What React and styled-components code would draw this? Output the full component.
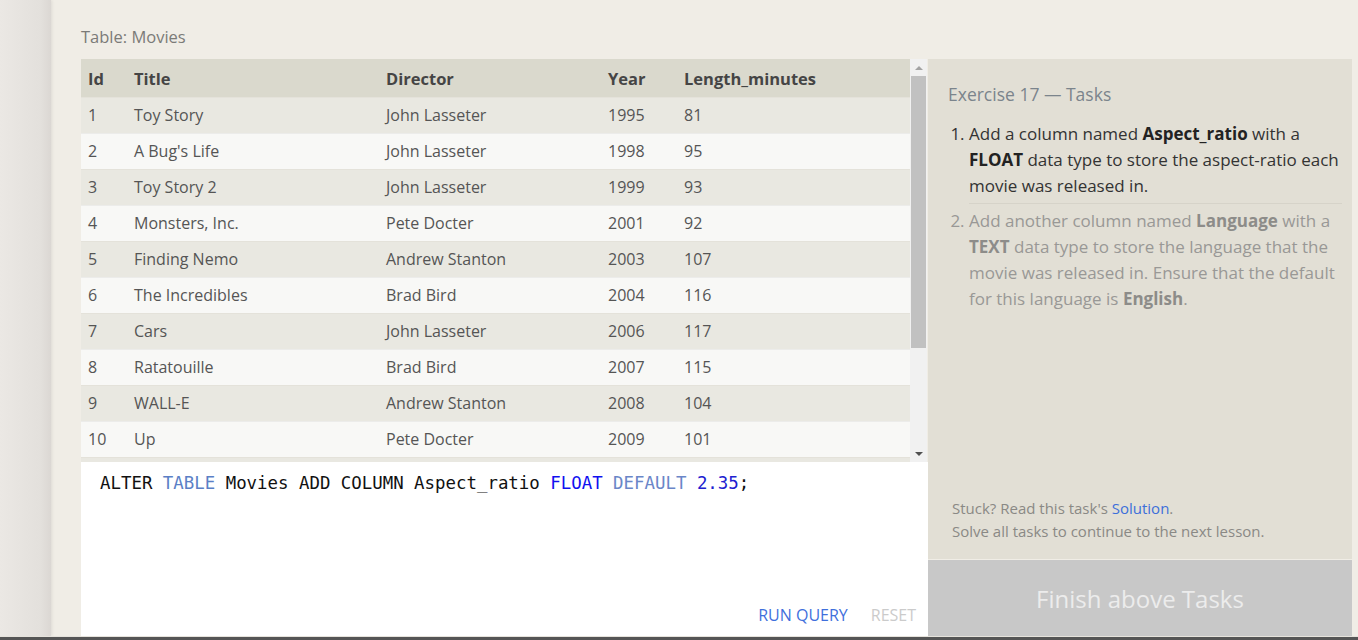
import React from "react";
import styled, { createGlobalStyle } from "styled-components";

const GlobalStyle = createGlobalStyle`
  html, body {
    margin: 0;
    padding: 0;
    height: 640px;
    overflow: hidden;
    background: #f0ede6;
    font-family: "Open Sans", "Noto Sans", sans-serif;
  }
  * {
    box-sizing: border-box;
  }
`;

const movies = [
  [1, "Toy Story", "John Lasseter", 1995, 81],
  [2, "A Bug's Life", "John Lasseter", 1998, 95],
  [3, "Toy Story 2", "John Lasseter", 1999, 93],
  [4, "Monsters, Inc.", "Pete Docter", 2001, 92],
  [5, "Finding Nemo", "Andrew Stanton", 2003, 107],
  [6, "The Incredibles", "Brad Bird", 2004, 116],
  [7, "Cars", "John Lasseter", 2006, 117],
  [8, "Ratatouille", "Brad Bird", 2007, 115],
  [9, "WALL-E", "Andrew Stanton", 2008, 104],
  [10, "Up", "Pete Docter", 2009, 101],
  [11, "Toy Story 3", "Lee Unkrich", 2010, 103],
  [12, "Cars 2", "John Lasseter", 2011, 120],
];

const Page = styled.div`
  display: flex;
  flex-direction: column;
  height: 640px;
`;

const Body = styled.div`
  display: flex;
  flex: 1;
`;

const Sidebar = styled.div`
  width: 51px;
  background: linear-gradient(to right, #ebe8e4, #e3e0dc 80%, #dbd7d3);
  box-shadow: 1px 0 3px rgba(0, 0, 0, 0.08);
`;

const Main = styled.div`
  flex: 1;
  padding: 26px 6px 0 30px;
  display: flex;
  flex-direction: column;
`;

const Caption = styled.div`
  font-size: 16.5px;
  line-height: 22px;
  color: #7b7b78;
  margin-bottom: 11px;
`;

const Workspace = styled.div`
  display: grid;
  grid-template-columns: 847px 1fr;
  height: 577px;
`;

const LeftCol = styled.div`
  display: flex;
  flex-direction: column;
`;

const TableScroll = styled.div`
  display: flex;
  height: 403px;
  overflow: hidden;
`;

const TableArea = styled.div`
  width: 829px;
  overflow: hidden;
`;

const Table = styled.table`
  width: 829px;
  border-collapse: collapse;
  table-layout: fixed;
`;

const Th = styled.th`
  width: ${(p) => p.w}px;
  height: 38px;
  padding: 1px 7px 0;
  text-align: left;
  background: #dad9cd;
  color: #454545;
  font-size: 16.5px;
  font-weight: 700;
`;

const Tr = styled.tr`
  background: ${(p) => (p.odd ? "#e9e8e1" : "#f8f8f6")};
  border-top: 1px solid ${(p) => (p.odd ? "#e4e2da" : "#ececea")};
`;

const Td = styled.td`
  height: 36px;
  padding: 0 7px;
  color: #555;
  font-size: 16px;
  white-space: nowrap;
`;

const Scrollbar = styled.div`
  width: 17px;
  background: #f1f1f1;
  display: flex;
  flex-direction: column;
  align-items: center;
`;

const Arrow = styled.div`
  height: 17px;
  width: 17px;
  display: flex;
  align-items: center;
  justify-content: center;
  &::after {
    content: "";
    border-left: 4px solid transparent;
    border-right: 4px solid transparent;
    ${(p) =>
      p.down
        ? "border-top: 4px solid #505050;"
        : "border-bottom: 4px solid #a3a3a3;"}
  }
`;

const Thumb = styled.div`
  width: 15px;
  height: 272px;
  background: #c1c1c1;
`;

const Track = styled.div`
  flex: 1;
`;

const Editor = styled.div`
  flex: 1;
  background: #fff;
  display: flex;
  flex-direction: column;
  padding: 9px 12px 10px 19px;
`;

const Code = styled.div`
  flex: 1;
  font-family: "DejaVu Sans Mono", "Liberation Mono", monospace;
  font-size: 17.4px;
  line-height: 24px;
  color: #111;
  white-space: pre;
`;

const Tok = styled.span`
  color: ${(p) => p.c};
`;

const Actions = styled.div`
  display: flex;
  justify-content: flex-end;
  gap: 23px;
`;

const ActionBtn = styled.span`
  font-size: 16px;
  line-height: 22px;
  color: ${(p) => (p.muted ? "#cbcbcb" : "#3f6fdc")};
`;

const RightCol = styled.div`
  display: flex;
  flex-direction: column;
`;

const Panel = styled.div`
  flex: 1;
  background: #e2dfd5;
  padding: 23px 10px 16px 20px;
  display: flex;
  flex-direction: column;
`;

const PanelTitle = styled.div`
  font-size: 17.5px;
  line-height: 24px;
  color: #7b848c;
  margin-bottom: 15px;
`;

const TaskList = styled.ol`
  margin: 0;
  padding: 0 0 0 21px;
  flex: 1;
`;

const Task = styled.li`
  font-size: 17px;
  line-height: 26px;
  color: ${(p) => (p.done ? "#999896" : "#333")};
  padding-bottom: ${(p) => (p.first ? "4px" : "0")};
  margin-bottom: ${(p) => (p.first ? "4px" : "0")};
  border-bottom: ${(p) => (p.first ? "1px solid #d6d3c9" : "none")};
  b {
    color: ${(p) => (p.done ? "#8d8c89" : "#222")};
  }
`;

const Note = styled.div`
  font-size: 15px;
  line-height: 23px;
  color: #8a8985;
  padding-left: 4px;
  a {
    color: #3d6fda;
    text-decoration: none;
  }
`;

const Finish = styled.div`
  height: 76px;
  background: #c8c8c8;
  color: #ececec;
  font-size: 24px;
  display: flex;
  align-items: center;
  justify-content: center;
  margin-top: 1px;
`;

const BottomLine = styled.div`
  height: 4px;
  border-top: 1px solid #e6e3dc;
  background: #555;
`;

const cols = [
  ["Id", 46],
  ["Title", 252],
  ["Director", 222],
  ["Year", 76],
  ["Length_minutes", 233],
];

const App = () => {
  return (
    <Page>
      <GlobalStyle />
      <Body>
        <Sidebar />
        <Main>
          <Caption>Table: Movies</Caption>
          <Workspace>
            <LeftCol>
              <TableScroll>
                <TableArea>
                  <Table>
                    <thead>
                      <tr>
                        {cols.map(([name, w]) => (
                          <Th key={name} w={w}>
                            {name}
                          </Th>
                        ))}
                      </tr>
                    </thead>
                    <tbody>
                      {movies.map((m, i) => (
                        <Tr key={m[0]} odd={i % 2 === 0}>
                          {m.map((v, j) => (
                            <Td key={j}>{v}</Td>
                          ))}
                        </Tr>
                      ))}
                    </tbody>
                  </Table>
                </TableArea>
                <Scrollbar>
                  <Arrow />
                  <Thumb />
                  <Track />
                  <Arrow down />
                </Scrollbar>
              </TableScroll>
              <Editor>
                <Code>
                  ALTER <Tok c="#5b7fc6">TABLE</Tok> Movies ADD COLUMN Aspect_ratio{" "}
                  <Tok c="#1010f0">FLOAT</Tok> <Tok c="#6a86c8">DEFAULT</Tok>{" "}
                  <Tok c="#2020d0">2.35</Tok>;
                </Code>
                <Actions>
                  <ActionBtn>RUN QUERY</ActionBtn>
                  <ActionBtn muted>RESET</ActionBtn>
                </Actions>
              </Editor>
            </LeftCol>
            <RightCol>
              <Panel>
                <PanelTitle>Exercise 17 — Tasks</PanelTitle>
                <TaskList>
                  <Task first>
                    Add a column named <b>Aspect_ratio</b> with a <b>FLOAT</b> data type
                    to store the aspect-ratio each movie was released in.
                  </Task>
                  <Task done>
                    Add another column named <b>Language</b> with a <b>TEXT</b> data type
                    to store the language that the movie was released in. Ensure that the
                    default for this language is <b>English</b>.
                  </Task>
                </TaskList>
                <Note>
                  Stuck? Read this task's <a href="#">Solution</a>.
                  <br />
                  Solve all tasks to continue to the next lesson.
                </Note>
              </Panel>
              <Finish>Finish above Tasks</Finish>
            </RightCol>
          </Workspace>
        </Main>
      </Body>
      <BottomLine />
    </Page>
  );
};

export default App;
